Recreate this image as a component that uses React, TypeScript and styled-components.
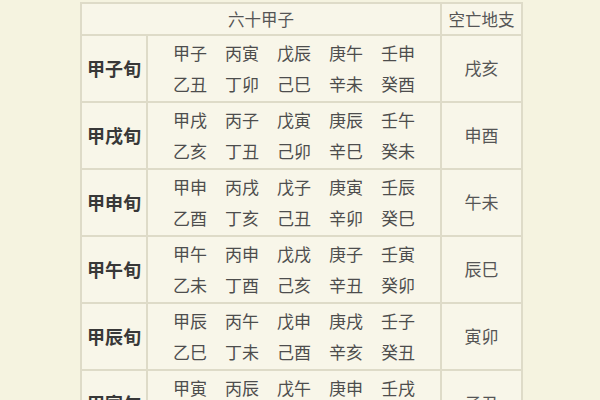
import React from 'react';
import styled, { createGlobalStyle } from 'styled-components';

const GlobalStyle = createGlobalStyle`
  html, body {
    margin: 0;
    padding: 0;
    background: #f5f3e0;
    font-family: "Noto Sans CJK SC", "Noto Sans", sans-serif;
  }
`;

const Page = styled.div`
  width: 600px;
  height: 400px;
  overflow: hidden;
  padding: 2px 0 0 80px;
  box-sizing: border-box;
`;

const Table = styled.table`
  border-collapse: collapse;
  background: #f8f6e9;
  border: 2px solid #dedbc8;
  table-layout: fixed;
  width: 443px;
`;

const HeadCell = styled.th`
  height: 30px;
  padding: 0;
  border: 2px solid #dedbc8;
  font-weight: 400;
  font-size: 16.5px;
  color: #555;
  text-align: center;
  vertical-align: middle;
`;

const LabelCell = styled.td`
  height: 63px;
  padding: 0 0 2px;
  border: 2px solid #dedbc8;
  font-weight: 700;
  font-size: 18px;
  color: #383838;
  text-align: center;
`;

const PairsCell = styled.td`
  padding: 0 0 2px;
  border: 2px solid #dedbc8;
`;

const EmptyCell = styled.td`
  padding: 0 0 2px;
  border: 2px solid #dedbc8;
  font-size: 17px;
  color: #555;
  text-align: center;
`;

const PairGrid = styled.div`
  display: grid;
  grid-template-columns: repeat(5, 34px);
  column-gap: 18px;
  justify-content: center;
`;

const Pair = styled.span`
  font-size: 17px;
  line-height: 31px;
  color: #4d4d4d;
  white-space: nowrap;
  text-align: center;
`;

const rows = [
  { label: '甲子旬', top: ['甲子', '丙寅', '戊辰', '庚午', '壬申'], bottom: ['乙丑', '丁卯', '己巳', '辛未', '癸酉'], empty: '戌亥' },
  { label: '甲戌旬', top: ['甲戌', '丙子', '戊寅', '庚辰', '壬午'], bottom: ['乙亥', '丁丑', '己卯', '辛巳', '癸未'], empty: '申酉' },
  { label: '甲申旬', top: ['甲申', '丙戌', '戊子', '庚寅', '壬辰'], bottom: ['乙酉', '丁亥', '己丑', '辛卯', '癸巳'], empty: '午未' },
  { label: '甲午旬', top: ['甲午', '丙申', '戊戌', '庚子', '壬寅'], bottom: ['乙未', '丁酉', '己亥', '辛丑', '癸卯'], empty: '辰巳' },
  { label: '甲辰旬', top: ['甲辰', '丙午', '戊申', '庚戌', '壬子'], bottom: ['乙巳', '丁未', '己酉', '辛亥', '癸丑'], empty: '寅卯' },
  { label: '甲寅旬', top: ['甲寅', '丙辰', '戊午', '庚申', '壬戌'], bottom: ['乙卯', '丁巳', '己未', '辛酉', '癸亥'], empty: '子丑' },
];

const App: React.FC = () => {
  return (
    <>
      <GlobalStyle />
      <Page>
        <Table>
          <colgroup>
            <col style={{ width: 66 }} />
            <col style={{ width: 294 }} />
            <col />
          </colgroup>
          <thead>
            <tr>
              <HeadCell colSpan={2}>六十甲子</HeadCell>
              <HeadCell>空亡地支</HeadCell>
            </tr>
          </thead>
          <tbody>
            {rows.map((row) => (
              <tr key={row.label}>
                <LabelCell>{row.label}</LabelCell>
                <PairsCell>
                  <PairGrid>
                    {[...row.top, ...row.bottom].map((p) => (
                      <Pair key={p}>{p}</Pair>
                    ))}
                  </PairGrid>
                </PairsCell>
                <EmptyCell>{row.empty}</EmptyCell>
              </tr>
            ))}
          </tbody>
        </Table>
      </Page>
    </>
  );
};

export default App;
